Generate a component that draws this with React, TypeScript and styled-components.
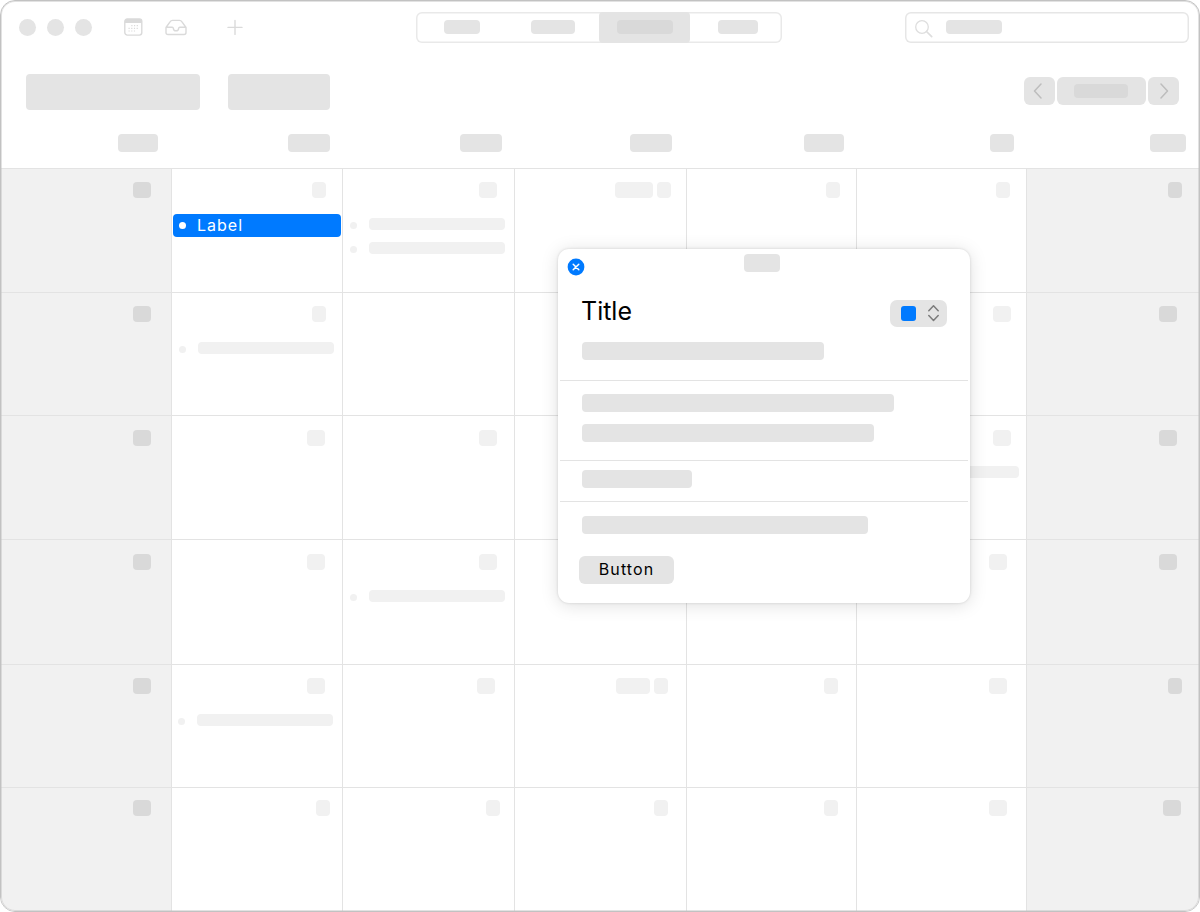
import * as React from 'react';
import styled, {createGlobalStyle} from 'styled-components';

const GlobalStyle = createGlobalStyle`
  * {
    box-sizing: border-box;
  }

  body {
    margin: 0;
    background: #fff;
    font-family: Inter, 'Liberation Sans', sans-serif;
  }
`;

const line = '#e3e3e3';
const blue = '#007aff';

const Window = styled.div`
  position: relative;
  display: flex;
  flex-direction: column;
  width: 1200px;
  height: 912px;
  border: 1px solid #c2c2c2;
  border-radius: 15px;
  background: #fff;
  overflow: hidden;

  &::after {
    content: '';
    position: absolute;
    inset: 0;
    border-radius: 14px;
    box-shadow: inset 0 0 0 1px rgba(190, 190, 190, 0.45);
    pointer-events: none;
  }
`;

const Chip = styled.span<{$w: number; $h?: number; $color?: string; $right?: number}>`
  flex: none;
  width: ${p => p.$w}px;
  height: ${p => p.$h || 14}px;
  margin-right: ${p => p.$right || 0}px;
  border-radius: 4px;
  background: ${p => p.$color || '#e4e4e4'};
`;

const Toolbar = styled.header`
  display: flex;
  align-items: center;
  height: 52px;
  padding: 0 10px 0 17.5px;
`;

const TrafficLights = styled.div`
  display: flex;
  gap: 11.3px;
  width: 105.5px;
`;

const Light = styled.span`
  width: 17px;
  height: 17px;
  border-radius: 50%;
  background: #e4e4e4;
`;

const ToolIcons = styled.div`
  display: flex;
  align-items: center;
  width: 292px;

  svg {
    display: block;
    fill: none;
    stroke: #dadada;
  }
`;

const InboxSlot = styled.span`
  margin: 1px 40px 0 22px;
`;

const Segmented = styled.div`
  display: flex;
  width: 366px;
  height: 31px;
  border-radius: 6px;
  box-shadow: inset 0 0 0 1.5px #e9e9e9;
`;

const Segment = styled.div<{$w: number; $selected?: boolean}>`
  display: flex;
  align-items: center;
  justify-content: center;
  width: ${p => p.$w}px;
  border-radius: 4px;
  background: ${p => p.$selected ? '#e4e4e4' : 'transparent'};

  &:last-child {
    padding-left: 4px;
  }
`;

const Search = styled.div`
  display: flex;
  align-items: center;
  gap: 13px;
  width: 284px;
  height: 31px;
  margin-left: auto;
  padding-left: 10px;
  border-radius: 6px;
  box-shadow: inset 0 0 0 1.5px #e6e6e6;

  svg {
    margin-top: 3px;
    fill: none;
    stroke: #dedede;
  }
`;

const Heading = styled.div`
  display: flex;
  align-items: center;
  gap: 28px;
  height: 76px;
  padding: 2px 20px 0 25px;
`;

const Pager = styled.div`
  display: flex;
  gap: 2px;
  margin-left: auto;
  padding-bottom: 2px;
`;

const PagerButton = styled.button<{$w: number}>`
  display: flex;
  align-items: center;
  justify-content: center;
  width: ${p => p.$w}px;
  height: 28px;
  padding: 0 1px 0 0;
  border: 0;
  border-radius: 6px;
  background: #e4e4e4;

  svg {
    fill: none;
    stroke: #bdbdbd;
    stroke-width: 1.5;
  }
`;

const columns = '171px 171px 172px 172px 170px 170px 172px';

const WeekHeader = styled.div`
  display: grid;
  grid-template-columns: ${columns};
  height: 39px;
  padding-top: 5px;
`;

const WeekDay = styled.div`
  display: flex;
  justify-content: flex-end;
`;

const Week = styled.div<{$h: number; $pad: number}>`
  display: grid;
  grid-template-columns: ${columns};
  height: ${p => p.$h}px;

  & > div {
    padding-top: ${p => p.$pad}px;
  }
`;

const Day = styled.div<{$weekend: boolean}>`
  border-top: 1px solid ${line};
  border-right: 1px solid ${line};
  background: ${p => p.$weekend ? '#f1f1f1' : '#fff'};

  &:last-child {
    border-right: 0;
  }
`;

const DayNumbers = styled.div`
  display: flex;
  justify-content: flex-end;
  gap: 4px;
  height: 16px;
`;

const Events = styled.div<{$x: number}>`
  display: flex;
  flex-direction: column;
  gap: 12px;
  padding: 20px 0 0 ${p => p.$x}px;
`;

const Event = styled.div`
  display: flex;
  align-items: center;
  gap: 12px;
  height: 12px;

  &::before {
    content: '';
    width: 7px;
    height: 7px;
    margin-top: 2px;
    border-radius: 50%;
    background: #f1f1f1;
  }
`;

const SelectedEvent = styled.div`
  display: flex;
  align-items: center;
  gap: 11px;
  width: 168px;
  height: 23px;
  margin: 16px 0 0 1px;
  padding-left: 6px;
  border-radius: 4px;
  background: ${blue};
  color: #fff;
  font-size: 16px;
  line-height: 23px;
  letter-spacing: 1px;

  &::before {
    content: '';
    width: 7px;
    height: 7px;
    border-radius: 50%;
    background: #fff;
  }
`;

const Popover = styled.section`
  position: absolute;
  top: 248px;
  left: 557px;
  width: 412px;
  height: 354px;
  border-radius: 11px;
  background: #fff;
  box-shadow: 0 0 3px rgba(0, 0, 0, 0.14), 0 2px 18px rgba(0, 0, 0, 0.13);
`;

const PopoverBar = styled.div`
  display: grid;
  grid-template-columns: 1fr auto 1fr;
  align-items: start;
  height: 51px;
  padding: 5px 9px 0 9px;

  & > span {
    margin-right: 4px;
  }
`;

const CloseButton = styled.button`
  width: 18px;
  height: 18px;
  margin-top: 4px;
  padding: 0;
  border: 0;
  background: none;

  svg {
    display: block;
  }
`;

const TitleRow = styled.div`
  display: flex;
  justify-content: space-between;
  height: 42px;
  padding: 0 23px;
`;

const Subtitle = styled.div`
  display: flex;
  height: 38px;
  padding-left: 24px;
`;

const Title = styled.h1`
  margin: -4px 0 0;
  color: #000;
  font-size: 25px;
  font-weight: 400;
  line-height: 30px;
`;

const ColorSelect = styled.button`
  display: flex;
  align-items: center;
  justify-content: space-between;
  width: 57px;
  height: 27px;
  padding: 0 7px 0 11px;
  border: 0;
  border-radius: 7px;
  background: #e4e4e4;

  svg {
    margin-bottom: 2px;
  }
`;

const Swatch = styled.span`
  width: 15px;
  height: 15px;
  margin-bottom: 1px;
  border-radius: 3px;
  background: ${blue};
`;

const Section = styled.div<{$h: number; $pad: number}>`
  display: flex;
  flex-direction: column;
  gap: 12px;
  height: ${p => p.$h}px;
  margin: 0 2px;
  padding: ${p => p.$pad}px 22px 0;
  border-top: 1px solid ${line};
`;

const Button = styled.button`
  width: 95px;
  height: 28px;
  margin: 10px 0 0 -3px;
  padding: 0 0 2px;
  border: 0;
  border-radius: 6px;
  background: #e4e4e4;
  color: #000;
  font: 400 16px/26px Inter, 'Liberation Sans', sans-serif;
  letter-spacing: 1.1px;
`;

// [width, distance to the right edge of the column]
type Mark = [number, number];

const weekDays: Mark[] = [[40, 14], [42, 13], [42, 13], [42, 15], [40, 13], [24, 13], [36, 13]];

interface WeekData {
  height: number;
  pad: number;
  days: Mark[][];
  events?: {[column: number]: {x: number; count: number}};
  selected?: number;
}

const weeks: WeekData[] = [
  {
    height: 124,
    pad: 13,
    days: [[[18, 20]], [[14, 16]], [[18, 17]], [[38, 0], [14, 15]], [[14, 16]], [[14, 16]], [[14, 17]]],
    events: {2: {x: 7, count: 2}},
    selected: 1,
  },
  {
    height: 123,
    pad: 13,
    days: [[[18, 20]], [[14, 16]], [], [], [], [[18, 15]], [[18, 22]]],
    events: {1: {x: 7, count: 1}},
  },
  {
    height: 124,
    pad: 14,
    days: [[[18, 20]], [[18, 17]], [[18, 17]], [], [], [[18, 15]], [[18, 22]]],
    events: {5: {x: 7, count: 1}},
  },
  {
    height: 125,
    pad: 14,
    days: [[[18, 20]], [[18, 17]], [[18, 17]], [], [], [[18, 19]], [[18, 22]]],
    events: {2: {x: 7, count: 1}},
  },
  {
    height: 123,
    pad: 13,
    days: [[[18, 20]], [[18, 17]], [[18, 19]], [[34, 0], [14, 18]], [[14, 18]], [[18, 19]], [[14, 17]]],
    events: {1: {x: 6, count: 1}},
  },
  {
    height: 124,
    pad: 12,
    days: [[[18, 20]], [[14, 12]], [[14, 14]], [[14, 18]], [[14, 18]], [[18, 19]], [[18, 18]]],
  },
];

const CalendarIcon = () => (
  <svg width='19' height='18' viewBox='0 0 19 18'>
    <rect x='0.8' y='0.9' width='17' height='16.2' rx='2.5' strokeWidth='1.4' />
    <path d='M1 2.5Q1 1 2.5 1h13.6q1.5 0 1.5 1.5v2.4H1z' fill='#dadada' stroke='none' />
    <path d='M7.3 7.6h8M4.5 10.3h10.5M4.5 13h8' strokeWidth='1.2' strokeDasharray='1.2 1.5' />
  </svg>
);

const InboxIcon = () => (
  <svg width='22' height='17' viewBox='0 0 22 17'>
    <path
      d='M1 8.5 5.2 2.6Q6 1.4 7.5 1.4h7q1.5 0 2.3 1.2L21 8.5v5q0 2-2 2H3q-2 0-2-2zM1 8.2h6.2q1 0 1.2 1.2a2.6 2.4 0 0 0 5.2 0q.2-1.2 1.2-1.2H21'
      strokeWidth='1.4'
      strokeLinejoin='round'
    />
  </svg>
);

const PlusIcon = () => (
  <svg width='16' height='16' viewBox='0 0 16 16'>
    <path d='M8 1.4v14M1 8.4h14' strokeWidth='1.4' strokeLinecap='round' />
  </svg>
);

const SearchIcon = () => (
  <svg width='18' height='18' viewBox='0 0 18 18'>
    <circle cx='7' cy='7' r='6.3' strokeWidth='1.3' />
    <path d='m11.5 11.5 5.2 5.2' strokeWidth='1.7' strokeLinecap='round' />
  </svg>
);

const Chevron = ({d}: {d: string}) => (
  <svg width='12' height='18' viewBox='0 0 12 18'>
    <path d={d} strokeLinecap='round' strokeLinejoin='round' />
  </svg>
);

const EventPopover = () => (
  <Popover>
    <PopoverBar>
      <CloseButton aria-label='Close'>
        <svg width='18' height='18' viewBox='0 0 18 18'>
          <circle cx='9' cy='9' r='8.4' fill={blue} />
          <path d='m6.2 6.2 5.6 5.6m0-5.6-5.6 5.6' stroke='#fff' strokeWidth='1.5' strokeLinecap='round' />
        </svg>
      </CloseButton>
      <Chip $w={36} $h={18} />
    </PopoverBar>
    <TitleRow>
      <Title>Title</Title>
      <ColorSelect aria-label='Color'>
        <Swatch />
        <svg width='13' height='18' viewBox='0 0 13 18'>
          <path
            d='m1.8 6.7 4.7-4.9 4.7 4.9m-9.4 4.8 4.7 4.9 4.7-4.9'
            fill='none'
            stroke='#7b7b7b'
            strokeWidth='1.5'
            strokeLinecap='round'
            strokeLinejoin='round'
          />
        </svg>
      </ColorSelect>
    </TitleRow>
    <Subtitle>
      <Chip $w={242} $h={18} />
    </Subtitle>
    <Section $h={80} $pad={13}>
      <Chip $w={312} $h={18} />
      <Chip $w={292} $h={18} />
    </Section>
    <Section $h={41} $pad={9}>
      <Chip $w={110} $h={18} />
    </Section>
    <Section $h={101} $pad={14}>
      <Chip $w={286} $h={18} />
      <Button>Button</Button>
    </Section>
  </Popover>
);

export default class App extends React.Component {
  public render() {
    return (
      <Window>
        <GlobalStyle />
        <Toolbar>
          <TrafficLights><Light /><Light /><Light /></TrafficLights>
          <ToolIcons>
            <CalendarIcon />
            <InboxSlot><InboxIcon /></InboxSlot>
            <PlusIcon />
          </ToolIcons>
          <Segmented>
            <Segment $w={91}><Chip $w={36} /></Segment>
            <Segment $w={92}><Chip $w={44} /></Segment>
            <Segment $w={91} $selected={true}><Chip $w={56} $color='#d9d9d9' /></Segment>
            <Segment $w={92}><Chip $w={40} /></Segment>
          </Segmented>
          <Search>
            <SearchIcon />
            <Chip $w={56} />
          </Search>
        </Toolbar>

        <Heading>
          <Chip $w={174} $h={36} />
          <Chip $w={102} $h={36} />
          <Pager>
            <PagerButton $w={31} aria-label='Previous'><Chevron d='M8 2 1.5 9 8 16' /></PagerButton>
            <PagerButton $w={89}><Chip $w={54} $color='#d9d9d9' /></PagerButton>
            <PagerButton $w={31} aria-label='Next'><Chevron d='m4 2 6.5 7L4 16' /></PagerButton>
          </Pager>
        </Heading>

        <WeekHeader>
          {weekDays.map(([w, right], i) => (
            <WeekDay key={i}><Chip $w={w} $h={18} $right={right} /></WeekDay>
          ))}
        </WeekHeader>

        {weeks.map((week, row) => (
          <Week key={row} $h={week.height} $pad={week.pad}>
            {week.days.map((marks, column) => {
              const weekend = column === 0 || column === 6;
              const events = week.events && week.events[column];

              return (
                <Day key={column} $weekend={weekend}>
                  <DayNumbers>
                    {marks.map(([w, right], i) => (
                      <Chip key={i} $w={w} $h={16} $right={right} $color={weekend ? '#d9d9d9' : '#f1f1f1'} />
                    ))}
                  </DayNumbers>
                  {week.selected === column ? <SelectedEvent>Label</SelectedEvent> : null}
                  {
                    events ?
                        <Events $x={events.x}>
                          {Array.from({length: events.count}, (_, i) => (
                            <Event key={i}><Chip $w={136} $h={12} $color='#f1f1f1' /></Event>
                          ))}
                        </Events> :
                        null
                  }
                </Day>
              );
            })}
          </Week>
        ))}

        <EventPopover />
      </Window>
    );
  }
}
